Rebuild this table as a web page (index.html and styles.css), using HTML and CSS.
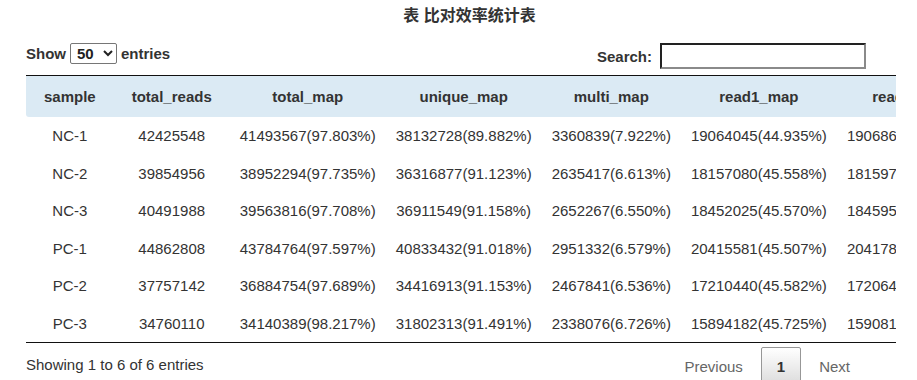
FILE: index.html
```html
<!DOCTYPE html>
<html lang="zh">
<head>
<meta charset="utf-8">
<title>比对效率统计表</title>
<link rel="stylesheet" href="styles.css">
</head>
<body>
<h3 class="caption">表 比对效率统计表</h3>
<div class="wrapper">
  <div class="top">
    <div class="length">
      <span>Show</span>
      <select class="length-select">
        <option>10</option>
        <option>25</option>
        <option selected>50</option>
        <option>100</option>
      </select>
      <span>entries</span>
    </div>
    <label class="filter">
      <span>Search:</span>
      <input type="search" class="filter-input">
    </label>
  </div>
  <div class="scroll">
    <table class="data">
      <thead>
        <tr>
          <th>sample</th>
          <th>total_reads</th>
          <th>total_map</th>
          <th>unique_map</th>
          <th>multi_map</th>
          <th>read1_map</th>
          <th class="wide">read2_map</th>
        </tr>
      </thead>
      <tbody>
        <tr><td>NC-1</td><td>42425548</td><td>41493567(97.803%)</td><td>38132728(89.882%)</td><td>3360839(7.922%)</td><td>19064045(44.935%)</td><td>19068613(44.945%)</td></tr>
        <tr><td>NC-2</td><td>39854956</td><td>38952294(97.735%)</td><td>36316877(91.123%)</td><td>2635417(6.613%)</td><td>18157080(45.558%)</td><td>18159714(45.565%)</td></tr>
        <tr><td>NC-3</td><td>40491988</td><td>39563816(97.708%)</td><td>36911549(91.158%)</td><td>2652267(6.550%)</td><td>18452025(45.570%)</td><td>18459524(45.588%)</td></tr>
        <tr><td>PC-1</td><td>44862808</td><td>43784764(97.597%)</td><td>40833432(91.018%)</td><td>2951332(6.579%)</td><td>20415581(45.507%)</td><td>20417848(45.512%)</td></tr>
        <tr><td>PC-2</td><td>37757142</td><td>36884754(97.689%)</td><td>34416913(91.153%)</td><td>2467841(6.536%)</td><td>17210440(45.582%)</td><td>17206418(45.571%)</td></tr>
        <tr><td>PC-3</td><td>34760110</td><td>34140389(98.217%)</td><td>31802313(91.491%)</td><td>2338076(6.726%)</td><td>15894182(45.725%)</td><td>15908104(45.765%)</td></tr>
      </tbody>
    </table>
  </div>
  <div class="bottom">
    <div class="info">Showing 1 to 6 of 6 entries</div>
    <div class="paginate">
      <span class="page-btn disabled">Previous</span>
      <span class="page-btn current">1</span>
      <span class="page-btn disabled">Next</span>
    </div>
  </div>
</div>
</body>
</html>
```
FILE: styles.css
```css
html, body {
  margin: 0;
  padding: 0;
  background: #ffffff;
}

body {
  font-family: "Liberation Sans", Arial, "Noto Sans CJK SC", sans-serif;
  font-size: 15px;
  color: #333333;
}

.caption {
  margin: 5px 0 0 0;
  padding-left: 22px;
  text-align: center;
  font-family: "Liberation Sans", "Noto Sans CJK SC", sans-serif;
  font-size: 16px;
  line-height: 22px;
  font-weight: bold;
  color: #333333;
}

.wrapper {
  margin-left: 26px;
  width: 870px;
}

.top {
  display: flex;
  justify-content: space-between;
  align-items: flex-start;
  padding-right: 30px;
  margin-top: 16px;
}

.length {
  display: flex;
  align-items: center;
  gap: 4px;
  height: 21px;
  font-weight: bold;
  color: #333333;
}

.length-select {
  width: 47px;
  height: 21px;
  font-family: "Liberation Sans", Arial, sans-serif;
  font-size: 15px;
  font-weight: bold;
  color: #222222;
  border: 1px solid #767676;
  border-radius: 2px;
  background: #ffffff;
  padding: 0 0 0 2px;
  margin: 0;
}

.filter {
  display: flex;
  align-items: center;
  gap: 8px;
  font-weight: bold;
  color: #333333;
}

.filter-input {
  box-sizing: border-box;
  width: 206px;
  height: 26px;
  margin: 0;
  padding: 1px 3px;
  border-width: 2px;
  border-style: solid;
  border-color: #222222 #8a8a8a #8a8a8a #222222;
  background: #ffffff;
  font-size: 15px;
}

.scroll {
  overflow: hidden;
  margin-top: 6px;
}

.data {
  border-collapse: separate;
  border-spacing: 0;
  white-space: nowrap;
  border-top: 1px solid #111111;
  border-bottom: 1px solid #111111;
}

.data th {
  background: #dbeaf4;
  font-weight: bold;
  color: #333333;
  padding: 10px 18px;
  line-height: 21px;
  text-align: center;
}

.data th:first-child {
  border-bottom-left-radius: 3px;
}

.data th.wide {
  padding-left: 12px;
}

.data td {
  padding: 8px 10px;
  line-height: 21.5px;
  text-align: center;
  color: #333333;
}

.bottom {
  display: flex;
  justify-content: space-between;
  align-items: flex-start;
  padding-right: 30px;
}

.info {
  padding-top: 10.5px;
  line-height: 21px;
}

.paginate {
  display: flex;
  padding-top: 4px;
}

.page-btn {
  box-sizing: border-box;
  min-width: 1.5em;
  padding: 7.5px 15px;
  margin-left: 2px;
  line-height: 21px;
  border: 1px solid transparent;
  border-radius: 2px;
  text-align: center;
}

.page-btn.disabled {
  color: #666666;
}

.page-btn.current {
  color: #333333;
  font-weight: bold;
  border-color: #979797;
  background: linear-gradient(to bottom, #ffffff 0%, #dcdcdc 100%);
}
```
